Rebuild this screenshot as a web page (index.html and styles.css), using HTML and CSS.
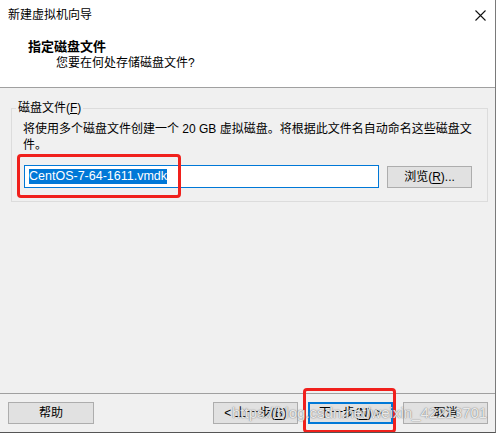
FILE: index.html
```html
<!DOCTYPE html>
<html lang="zh-CN">
<head>
    <meta charset="UTF-8">
    <meta name="viewport" content="width=device-width, initial-scale=1.0">
    <title>新建虚拟机向导</title>
    <link rel="stylesheet" href="styles.css">
</head>
<body>
    <div class="dialog">
        <div class="titlebar">
            <span class="title">新建虚拟机向导</span>
            <svg class="close" width="11" height="11" viewBox="0 0 11 11">
                <path d="M0.5 0.5 L10.5 10.5 M10.5 0.5 L0.5 10.5" stroke="#111" stroke-width="1.1" fill="none"/>
            </svg>
        </div>

        <div class="header">
            <div class="heading">指定磁盘文件</div>
            <div class="subheading">您要在何处存储磁盘文件?</div>
        </div>

        <div class="content">
            <fieldset class="group">
                <legend>磁盘文件(<u>F</u>)</legend>
                <div class="group-body">
                    <p class="desc">将使用多个磁盘文件创建一个 20 GB 虚拟磁盘。将根据此文件名自动命名这些磁盘文件。</p>
                    <div class="file-row">
                        <div class="field"><span class="selected">CentOS-7-64-1611.vmdk</span></div>
                        <button class="btn browse">浏览(<u>R</u>)...</button>
                    </div>
                </div>
            </fieldset>
        </div>

        <div class="footer">
            <button class="btn">帮助</button>
            <div class="nav">
                <button class="btn">&lt; 上一步(<u>B</u>)</button>
                <button class="btn default">下一步(<u>N</u>) &gt;</button>
                <button class="btn">取消</button>
            </div>
        </div>

        <!-- annotations drawn on the screenshot -->
        <span class="mark mark-file"></span>
        <span class="mark mark-next"></span>
        <span class="watermark">https://blog.csdn.net/weixin_42213701</span>
    </div>
</body>
</html>
```

FILE: styles.css
```css
* {
    margin: 0;
    padding: 0;
    box-sizing: border-box;
}

body {
    font-family: "Liberation Sans", "Noto Sans CJK SC", sans-serif;
    font-size: 12px;
    line-height: 16px;
    color: #000;
    background: #fff;
}

.dialog {
    position: relative;
    width: 496px;
    height: 433px;
    border-right: 1px solid #7a7a7a;
    border-bottom: 1px solid #555;
    background: #f0f0f0;
    overflow: hidden;
}

.titlebar {
    height: 30px;
    display: flex;
    align-items: center;
    justify-content: space-between;
    padding: 0 9px 0 8px;
    background: #fff;
}

.close {
    display: block;
}

.header {
    height: 58px;
    padding: 9px 0 0 28px;
    background: #fff;
    border-bottom: 1px solid #a0a0a0;
}

.heading {
    font-size: 13px;
    font-weight: 700;
}

.subheading {
    padding-left: 28px;
}

.content {
    height: 305px;
    padding: 12px 7px 0 11px;
}

.group {
    border: 1px solid #dcdcdc;
    padding: 0;
}

.group legend {
    margin-left: 4px;
    padding: 0 2px;
    line-height: 16px;
}

.group-body {
    padding: 5px 5px 13px 11px;
}

.desc {
    line-height: 16px;
}

.file-row {
    display: flex;
    align-items: center;
    gap: 8px;
    margin-top: 12px;
    margin-left: 1px;
}

.field {
    width: 355px;
    height: 23px;
    display: flex;
    align-items: center;
    padding-left: 4px;
    background: #fff;
    border: 1px solid #0078d7;
}

.selected {
    background: #0078d7;
    color: #fff;
    font-size: 12.5px;
    line-height: 14px;
    padding: 0 0 1px;
}

.btn {
    height: 22px;
    width: 85px;
    font: inherit;
    line-height: 16px;
    color: #000;
    background: #e1e1e1;
    border: 1px solid #adadad;
}

.btn u {
    text-underline-offset: 2px;
}

.browse {
    width: 85px;
}

.btn.default {
    border-color: #0078d7;
    box-shadow: inset 0 0 0 1px #0078d7;
}

.footer {
    height: 40px;
    display: flex;
    justify-content: space-between;
    padding: 8px 7px 0 8px;
    border-top: 1px solid #a0a0a0;
}

.footer > .btn {
    width: 86px;
}

.nav {
    display: flex;
    gap: 10px;
}

.mark {
    position: absolute;
    border: 3px solid #f0201c;
    border-radius: 4px;
}

.mark-file {
    left: 17px;
    top: 154px;
    width: 164px;
    height: 44px;
}

.mark-next {
    left: 303px;
    top: 388px;
    width: 93px;
    height: 45px;
}

.watermark {
    position: absolute;
    left: 232px;
    top: 404px;
    font-family: "Liberation Sans", sans-serif;
    font-size: 15px;
    line-height: 18px;
    color: rgba(255, 255, 255, 0.85);
    text-shadow: 0 0 1px rgba(90, 90, 90, 0.9), 0 0 2px rgba(150, 150, 150, 0.6);
    white-space: nowrap;
    pointer-events: none;
}
```
